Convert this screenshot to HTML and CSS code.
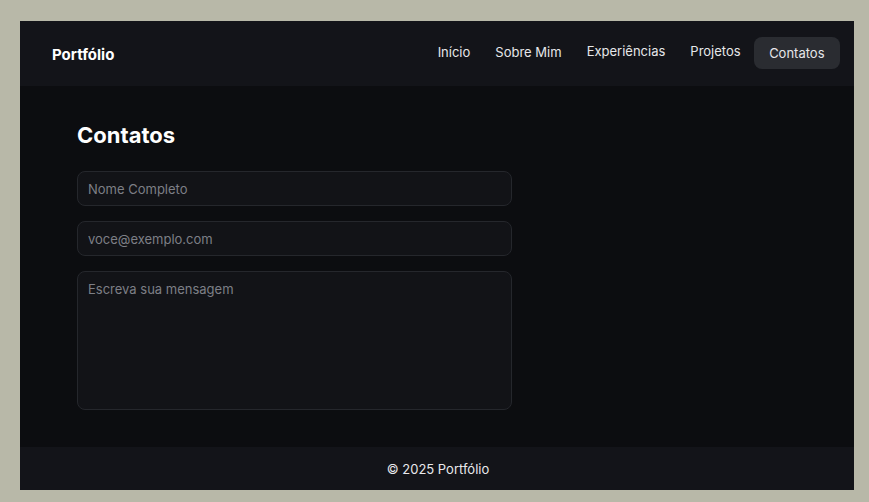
FILE: index.html
```html
<!DOCTYPE html>
<html lang="pt">
<head>
<meta charset="utf-8">
<title>Portfólio</title>
<link rel="stylesheet" href="styles.css">
</head>
<body>
<div class="frame">
  <header class="header">
    <div class="logo">Portfólio</div>
    <nav class="nav">
      <a class="nav-link">Início</a>
      <a class="nav-link">Sobre Mim</a>
      <a class="nav-link raised">Experiências</a>
      <a class="nav-link raised">Projetos</a>
      <a class="nav-link active">Contatos</a>
    </nav>
  </header>
  <main class="main">
    <h1 class="title">Contatos</h1>
    <form class="form">
      <input class="field" type="text" placeholder="Nome Completo">
      <input class="field" type="email" placeholder="voce@exemplo.com">
      <textarea class="field area" placeholder="Escreva sua mensagem"></textarea>
    </form>
  </main>
  <footer class="footer">© 2025 Portfólio</footer>
</div>
</body>
</html>
```
FILE: styles.css
```css
* { box-sizing: border-box; }
html, body { margin: 0; padding: 0; }
body {
  background: #b8b8a8;
  font-family: Inter, "Noto Sans", sans-serif;
  padding: 21px 15px 12px 20px;
}
.frame {
  width: 834px;
  height: 469px;
  display: flex;
  flex-direction: column;
  background: #0c0d10;
}
.header {
  height: 65px;
  flex: none;
  background: #131419;
  display: flex;
  align-items: center;
  justify-content: space-between;
  padding: 0 14px 2px 32px;
}
.logo {
  color: #ffffff;
  font-weight: 700;
  font-size: 15px;
  line-height: 24px;
  margin-top: 5px;
}
.nav {
  display: flex;
  align-items: center;
  gap: 1px;
}
.nav-link {
  color: #e6e7ea;
  font-size: 13px;
  line-height: 20px;
  padding: 6px 12px;
  border-radius: 8px;
  margin-top: -1px;
}
.nav-link.raised { margin-top: -3px; }
.nav-link.active {
  background: #2a2c31;
  padding: 6px 15.5px;
  height: 32px;
  margin-top: 0;
  display: flex;
  align-items: center;
}
.main {
  flex: 1;
  padding: 33px 57px 0;
}
.title {
  margin: 0 0 20px;
  color: #ffffff;
  font-size: 22px;
  line-height: 32px;
  font-weight: 700;
}
.form {
  width: 435px;
  display: flex;
  flex-direction: column;
  gap: 15px;
}
.field {
  display: block;
  width: 100%;
  height: 35px;
  background: #121317;
  border: 1px solid #25272c;
  border-radius: 8px;
  padding: 0 10px;
  color: #e6e7ea;
  font-family: Inter, "Noto Sans", sans-serif;
  font-size: 13px;
  outline: none;
}
.field::placeholder { color: #7d7f86; }
.area {
  height: 139px;
  padding: 8px 10px;
  resize: none;
  line-height: 18px;
}
.footer {
  height: 43px;
  flex: none;
  background: #131419;
  color: #e8e9ec;
  font-size: 13px;
  display: flex;
  align-items: center;
  justify-content: center;
  padding-left: 2px;
}
```
